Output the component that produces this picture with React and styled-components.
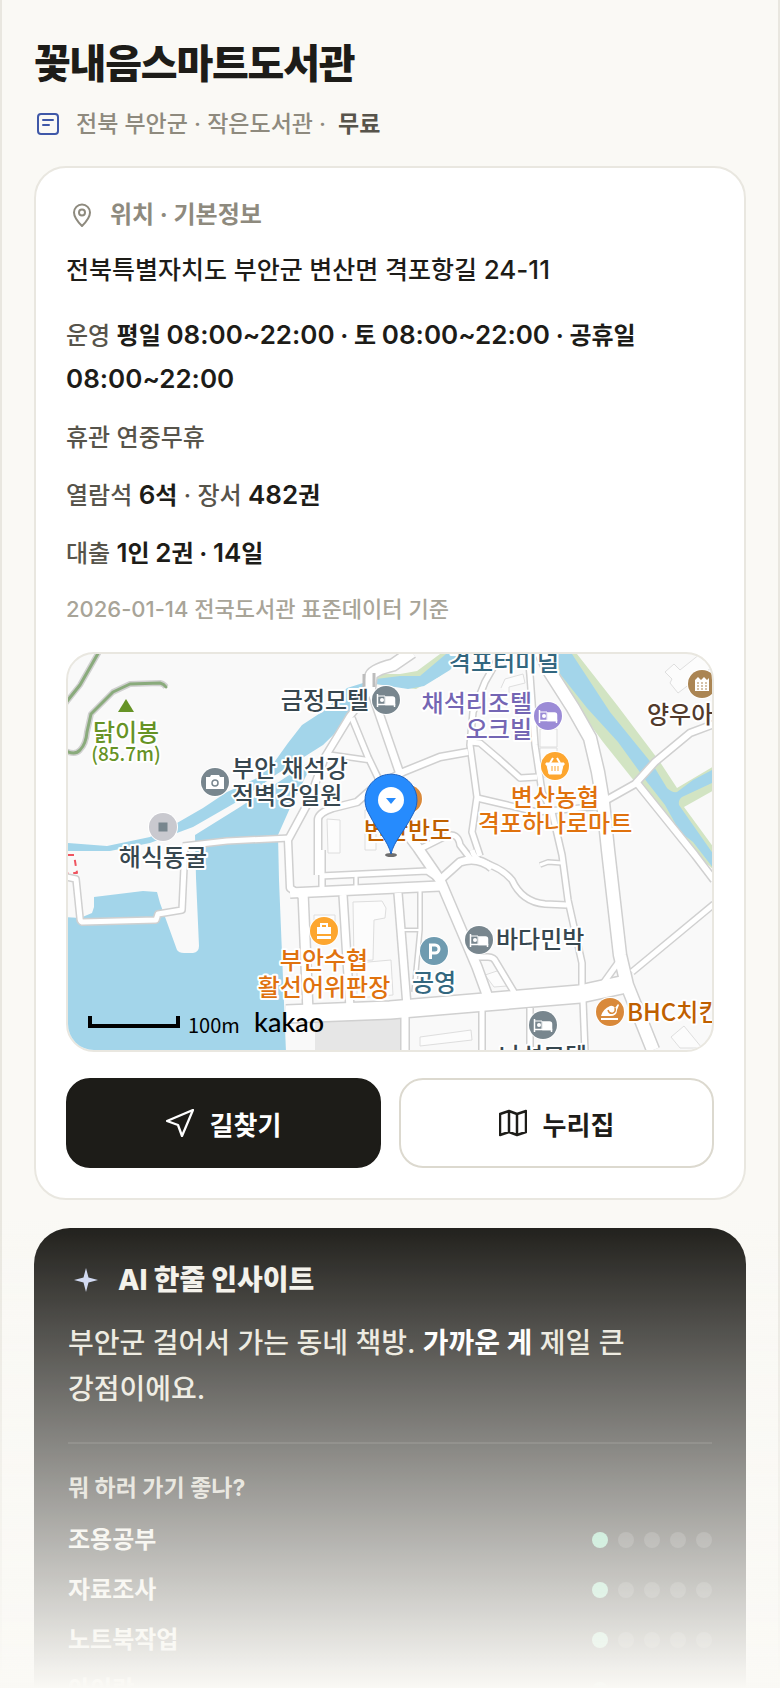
import React from "react";
import styled, { createGlobalStyle, css } from "styled-components";

const GlobalStyle = createGlobalStyle`
  * {
    box-sizing: border-box;
  }
  body {
    margin: 0;
    background-color: #faf9f5;
    color: #1d1c18;
    font-family: Inter, "Noto Sans CJK KR", sans-serif;
    word-break: keep-all;
  }
  h1, h2, h3, p, ul {
    margin: 0;
    padding: 0;
  }
`;

const Page = styled.main`
  height: 100vh;
  overflow: hidden;
  display: flex;
  flex-direction: column;
  padding: 34px 32px 0;
  border-left: 2px solid #e9e7e0;
  border-right: 2px solid #e9e7e0;
`;

const Title = styled.h1`
  font-size: 40px;
  line-height: 60px;
  font-weight: 800;
  letter-spacing: -0.03em;
`;

const Meta = styled.div`
  display: flex;
  align-items: center;
  gap: 12px;
  margin-top: 12px;
  padding-left: 2px;
  font-size: 23px;
  line-height: 36px;
  font-weight: 500;
  color: #8e8a7e;
  strong {
    color: #57544b;
    font-weight: 700;
  }
  svg {
    margin-right: 4px;
  }
`;

const Card = styled.section`
  flex: none;
  margin-top: 24px;
  padding: 30px;
  border: 2px solid #e9e7e0;
  border-radius: 32px;
  background-color: #fff;
`;

const CardHeader = styled.h2`
  display: flex;
  align-items: center;
  gap: 16px;
  padding-left: 4px;
  font-size: 24px;
  line-height: 34px;
  font-weight: 700;
  color: #8e8a7e;
`;

const Address = styled.p`
  margin-top: 18px;
  font-size: 25px;
  line-height: 40px;
  font-weight: 500;
`;

const Hours = styled.div`
  margin-top: 24px;
`;

const Info = styled.p`
  margin-bottom: 14px;
  font-size: 24px;
  line-height: 44px;
  font-weight: 500;
  color: #57544b;
  strong {
    color: #1d1c18;
    font-weight: 700;
  }
`;

const Num = styled.span`
  font-size: 26px;
  line-height: 1;
  strong & {
    font-weight: 600;
  }
`;

const Source = styled.p`
  margin-top: 16px;
  font-size: 22px;
  line-height: 34px;
  font-weight: 500;
  color: #a8a498;
`;

const MapBox = styled.div`
  height: 400px;
  margin-top: 26px;
  border: 2px solid #e9e7e0;
  border-radius: 28px;
  overflow: hidden;
  background-color: #f9f9f9;
  svg {
    display: block;
    width: 100%;
    height: 100%;
  }
`;

const Actions = styled.div`
  display: grid;
  grid-template-columns: 1fr 1fr;
  gap: 18px;
  margin-top: 26px;
`;

const Button = styled.button`
  display: flex;
  align-items: center;
  justify-content: center;
  gap: 16px;
  height: 90px;
  border: 2px solid #dcd9cf;
  border-radius: 24px;
  background-color: #fff;
  color: #1d1c18;
  font-family: inherit;
  font-size: 26px;
  font-weight: 700;
  cursor: pointer;
  ${({ $primary }) =>
    $primary &&
    css`
      border-color: #1d1c18;
      background-color: #1d1c18;
      color: #fff;
    `}
`;

const Insight = styled.section`
  flex: none;
  margin-top: 28px;
  padding: 34px;
  border-radius: 36px;
  background-color: #1d1c18;
  color: #f3f1ea;
`;

const InsightTitle = styled.h2`
  display: flex;
  align-items: center;
  gap: 20px;
  padding-left: 6px;
  font-size: 28px;
  line-height: 36px;
  font-weight: 800;
`;

const InsightText = styled.p`
  margin-top: 22px;
  font-size: 28px;
  line-height: 46px;
  font-weight: 500;
  color: #e9e6db;
  strong {
    color: #fff;
    font-weight: 700;
  }
`;

const Fits = styled.div`
  margin-top: 30px;
  padding-top: 26px;
  border-top: 2px solid rgba(255, 255, 255, 0.1);
`;

const FitsTitle = styled.h3`
  margin-bottom: 16px;
  font-size: 23px;
  line-height: 36px;
  font-weight: 700;
  color: #d3d0c5;
`;

const FitList = styled.ul`
  display: grid;
  gap: 14px;
  list-style: none;
`;

const FitRow = styled.li`
  display: flex;
  align-items: center;
  justify-content: space-between;
  font-size: 24px;
  line-height: 36px;
  font-weight: 600;
`;

const Dots = styled.span`
  display: flex;
  gap: 10px;
`;

const Dot = styled.span`
  width: 16px;
  height: 16px;
  border-radius: 50%;
  background-color: ${({ $on }) => ($on ? "#7fd8b0" : "rgba(255, 255, 255, 0.16)")};
`;

const Fade = styled.div`
  position: fixed;
  left: 0;
  right: 0;
  bottom: 0;
  height: 28vh;
  background: linear-gradient(to bottom, rgba(250, 249, 245, 0), #faf9f5);
  pointer-events: none;
`;

const MapLabel = styled.text`
  font-family: "Noto Sans CJK KR", sans-serif;
  font-size: ${({ $small }) => ($small ? "19px" : "24px")};
  font-weight: 500;
  fill: ${({ $color }) => $color};
  stroke: #fff;
  stroke-width: 4px;
  stroke-linejoin: round;
  paint-order: stroke;
`;

const MapScale = styled.text`
  font-family: "Noto Sans CJK KR", sans-serif;
  font-size: 20px;
`;

const MapLogo = styled.text`
  font-family: Lato, sans-serif;
  font-size: 27px;
  font-weight: 500;
`;

// [path, outer width]
const roads = [
  ["M412 652L393 665Q372 670 371 676L369 692", 14],
  ["M371 690L400 774", 10],
  ["M369 692L350 716L325 757L308 803L288 840L290 888L303 897", 9],
  ["M352 718L368 757L380 782", 8],
  ["M326 754L368 760", 7],
  ["M318 875V820Q318 813 333 808L357 802L373 788L403 772L440 757L468 752", 9],
  ["M502 652L485 682L473 712L470 745L477 797L472 832L480 856", 8],
  ["M470 742L480 743L500 760L520 778L537 777", 8],
  ["M540 650L550 672L573 708L590 738L598 772L603 802L608 850L620 955L627 985L653 1050", 15],
  ["M603 802L635 784L655 762L690 733L714 724", 9],
  ["M637 783L695 855L714 880", 9],
  ["M528 654L530 675L535 745L542 792L552 812L562 855L568 900L582 963V990", 8],
  ["M477 798L507 805L537 812L603 806", 8],
  ["M472 850Q474 858 482 862Q502 868 512 880Q522 902 545 904L567 905", 8],
  ["M540 865L548 862L562 863", 6],
  ["M714 904L632 972", 8],
  ["M286 1014L390 1010L473 1003L580 994L626 984", 20],
  ["M620 960L602 985", 8],
  ["M583 1000L585 1052", 8],
  ["M530 1008V1052", 8],
  ["M482 1010V1052", 8],
  ["M405 1010V1052", 10],
  ["M474 957H488Q494 957 496 962L514 992", 8],
  ["M470 948L488 997", 8],
  ["M303 892L308 1012", 12],
  ["M290 893L440 886", 12],
  ["M320 876L427 871L440 880", 8],
  ["M322 850V890", 8],
  ["M356 873V890", 6],
  ["M343 895L350 1008", 10],
  ["M398 893L407 1006", 10],
  ["M373 788L418 848L440 880L477 967L489 1000", 12],
  ["M440 880L460 862Q478 856 492 868", 10],
  ["M418 850L446 836Q458 832 460 845L470 858", 8],
  ["M420 890V930L414 992", 6],
  ["M400 930H420", 5],
  ["M183 846L227 841L290 838", 8],
  ["M185 846L182 910L158 914L156 920L82 922Q80 921 80 918L76 879L66 877", 8],
];

const trails = [
  "M100 650L80 685L64 705",
  "M64 750Q75 756 80 750Q86 744 87 732L91 714L113 692L130 684L160 683Q164 684 166 687",
];

const buildings = [
  "M327 819L340 820V853H328Z",
  "M365 810H376V850H365Z",
  "M314 915H335V935H314Z",
  "M353 902L382 901L386 908L385 918L374 920L373 960L354 961Z",
  "M357 963L391 960L393 995L357 998Z",
  "M540 729H557V747H540Z",
  "M540 748H557V777H540Z",
  "M501 688L505 679L523 674L525 683L509 687V693",
  "M665 672L674 664L680 670L700 654L711 668L678 693L670 683L672 679Z",
  "M420 1037L471 1030L472 1040L420 1046Z",
  "M485 975L500 970L507 986L494 987Z",
  "M671 1037L684 1026L702 1048H680Z",
];

const labels = [
  { text: "격포터미널", x: 504, y: 671, color: "#33677f" },
  { text: "금정모텔", x: 325, y: 709, color: "#37474f" },
  { text: "채석리조텔", x: 532, y: 712, anchor: "end", color: "#7466b4" },
  { text: "오크빌", x: 532, y: 738, anchor: "end", color: "#7466b4" },
  { text: "양우아파트", x: 647, y: 723, anchor: "start", color: "#523a2c" },
  { text: "닭이봉", x: 126, y: 741, color: "#669326" },
  { text: "(85.7m)", x: 126, y: 761, color: "#669326", small: true },
  { text: "부안 채석강", x: 232, y: 777, anchor: "start", color: "#37474f" },
  { text: "적벽강일원", x: 232, y: 804, anchor: "start", color: "#37474f" },
  { text: "변산농협", x: 555, y: 806, color: "#e0720e" },
  { text: "격포하나로마트", x: 555, y: 832, color: "#e0720e" },
  { text: "변산반도", x: 408, y: 839, color: "#bf6000" },
  { text: "해식동굴", x: 163, y: 866, color: "#37474f" },
  { text: "부안수협", x: 324, y: 969, color: "#e0720e" },
  { text: "활선어위판장", x: 324, y: 996, color: "#e0720e" },
  { text: "공영", x: 434, y: 991, color: "#33677f" },
  { text: "바다민박", x: 496, y: 948, anchor: "start", color: "#37474f" },
  { text: "BHC치킨", x: 627, y: 1021, anchor: "start", color: "#bf6000" },
  { text: "나성모텔", x: 543, y: 1065, color: "#37474f" },
];

const Bed = () => (
  <g fill="none" stroke="#fff" strokeWidth="1.500">
    <path d="M-8.500 -6V7M-8.500 4.500H8.500V7" />
    <path d="M0 -3H6.500Q8.500 -3 8.500 -1V4.500H0Z" fill="#fff" />
    <path d="M-8 -4H-1V4" strokeWidth="1" />
    <circle cx="-4" cy="0" r="2" fill="#fff" stroke="none" />
  </g>
);

const pois = [
  { x: 386, y: 700, color: "#78868e", glyph: <Bed /> },
  { x: 548, y: 716, color: "#9b8bd6", glyph: <Bed /> },
  { x: 479, y: 940, color: "#78868e", glyph: <Bed /> },
  { x: 543, y: 1025, color: "#78868e", glyph: <Bed /> },
  {
    x: 555,
    y: 766,
    color: "#fda62f",
    glyph: (
      <g fill="none" stroke="#fff" strokeWidth="2">
        <path d="M-9 -3H9V-1H8L6 8H-6L-8 -1H-9Z" fill="#fff" strokeWidth="1" />
        <path d="M-5 -3L-2 -8M5 -3L2 -8" />
        <path d="M-3 0V5M0 0V5M3 0V5" stroke="#fda62f" strokeWidth="1" />
      </g>
    ),
  },
  {
    x: 702,
    y: 684,
    color: "#ab8553",
    glyph: (
      <g>
        <path d="M-7 7V-4L-4 -7L-1 -4L2 -7L5 -4L7 -6V7Z" fill="#fff" />
        <path d="M-5 -1H6M-5 2H6M-5 5H6" stroke="#ab8553" strokeWidth="1" strokeDasharray="2 2" />
      </g>
    ),
  },
  {
    x: 215,
    y: 782,
    color: "#78868e",
    glyph: (
      <g>
        <path d="M-9 -5H-5L-4 -7H4L5 -5H9V7H-9Z" fill="#fff" />
        <circle cx="0" cy="1" r="3" fill="none" stroke="#78868e" strokeWidth="1.500" />
      </g>
    ),
  },
  { x: 163, y: 827, color: "#c9c9cf", glyph: <rect x="-4.500" y="-4.500" width="9" height="9" fill="#78868e" /> },
  { x: 408, y: 799, color: "#d9893a", glyph: null },
  {
    x: 324,
    y: 931,
    color: "#fda62f",
    glyph: (
      <g>
        <path d="M-7 -4H7V3H-7ZM-7 5H7V8H-7Z" fill="#fff" />
        <path d="M-3 -4V-7H3V-4" fill="none" stroke="#fff" strokeWidth="2" />
      </g>
    ),
  },
  {
    x: 434,
    y: 951,
    color: "#6f9bb0",
    glyph: <path d="M-3.500 8V-6H1A4 4 0 0 1 1 2H-3" fill="none" stroke="#fff" strokeWidth="3" />,
  },
  {
    x: 610,
    y: 1012,
    color: "#d9893a",
    glyph: (
      <g>
        <path d="M-9 7H8" stroke="#fff" strokeWidth="2" />
        <path d="M-9 4Q-7 -3 0 -6Q3 -7 5 -4L8 -8L9 -7L7 -2Q7 4 0 4Z" fill="#fff" />
        <path d="M-2 -2Q-1 2 3 1Q6 0 5 -4" fill="none" stroke="#d9893a" strokeWidth="1.500" />
      </g>
    ),
  },
];

const LocationMap = () => (
  <svg viewBox="68 654 644 396" preserveAspectRatio="xMidYMid slice" role="img" aria-label="지도">
    <g fill="#d2e4c3">
      <path d="M376 674L400 674L417 671L440 654H466L440 676L416 689L376 684Z" />
      <path d="M554 654H577L617 705L660 762L677 788L714 766V790L684 807L714 848V870L697 855L667 822L635 782L603 742L572 700L558 677Z" />
    </g>
    <g fill="#a3d5ea">
      <path d="M446 654L420 676L400 676L376 679L347 688L328 708L302 725L288 743L273 764L257 778L227 792L203 808L177 823L150 837L107 846L67 843V851L110 851L150 843L193 827L240 800L277 774L323 745L357 712L376 684L408 689L424 686L450 670L464 654Z" />
      <path d="M195 835L240 807L300 768L314 760L290 808L278 835L279 880L286 1052H66V917L80 918L92 913L94 907V897L143 891L157 892L160 903L177 950Q179 953 184 953H193Q199 952 199 946L196 878Z" />
      <path d="M557 654H572L610 712L653 765L667 788Q672 793 677 792L693 780L714 769V782L682 797Q678 800 679 805L714 855V869L693 842L680 832L665 805L647 782L618 742L587 708L560 674Z" />
    </g>
    <path d="M315 1022L400 1018V1052H315Z" fill="#e6e6e6" />
    <g fill="none" strokeLinejoin="round">
      {buildings.map((d) => (
        <path key={d} d={d} fill="#fcfcfc" stroke="#dedede" />
      ))}
      {roads.map(([d, width]) => (
        <path key={d} d={d} stroke="#d0d0d0" strokeWidth={width} />
      ))}
      {roads.map(([d, width]) => (
        <path key={d} d={d} stroke="#fff" strokeWidth={width - 3} />
      ))}
      {trails.map((d) => (
        <path key={d} d={d} stroke="#d0d0d0" strokeWidth="6" />
      ))}
      {trails.map((d) => (
        <path key={d} d={d} stroke="#8aab7c" strokeWidth="3" strokeLinecap="round" />
      ))}
      <path d="M364 674V688M374 673V687" stroke="#bdbdbd" strokeWidth="3" />
      <path d="M68 855H74L77 873H68" stroke="#ef5560" strokeWidth="2" strokeDasharray="6 5" />
    </g>
    <path d="M126 699L134 712H118Z" fill="#669326" />
    {pois.map(({ x, y, color, glyph }) => (
      <g key={`${x}-${y}`} transform={`translate(${x} ${y})`}>
        <circle r="15" fill="#fff" />
        <circle r="14" fill={color} />
        {glyph}
      </g>
    ))}
    {labels.map(({ text, x, y, anchor = "middle", color, small }) => (
      <MapLabel key={text} x={x} y={y} textAnchor={anchor} $color={color} $small={small}>
        {text}
      </MapLabel>
    ))}
    <ellipse cx="391" cy="855" rx="6" ry="2" fill="#6e6e6e" />
    <path
      d="M391 854C388 841 378 832 369 814A26 26 0 1 1 413 814C404 832 394 841 391 854Z"
      fill="#268bfd"
      stroke="#1a62c4"
    />
    <circle cx="391" cy="800" r="13" fill="#fff" />
    <path d="M386 798H396L391 804Z" fill="#268bfd" />
    <path d="M90 1016V1026H178V1016" fill="none" stroke="#000" strokeWidth="4" />
    <MapScale x="188" y="1033">
      100m
    </MapScale>
    <MapLogo x="254" y="1032">
      kakao
    </MapLogo>
  </svg>
);

const MemoIcon = () => (
  <svg width="24" height="24" viewBox="0 0 24 24" fill="none" stroke="#3f58a8" strokeWidth="2" strokeLinecap="round">
    <rect x="2" y="2" width="20" height="20" rx="3" />
    <path d="M7 8H17M7 13H13" />
  </svg>
);

const PinIcon = () => (
  <svg width="24" height="24" viewBox="0 0 24 24" fill="none" stroke="currentColor" strokeWidth="2">
    <path d="M12 23C7 18 4 14 4 9.500A8 8 0 0 1 20 9.500C20 14 17 18 12 23Z" />
    <circle cx="12" cy="9.500" r="3" />
  </svg>
);

const ArrowIcon = () => (
  <svg width="28" height="28" viewBox="0 0 28 28" fill="none" stroke="currentColor" strokeWidth="2.300" strokeLinejoin="round">
    <path d="M27 1L1 12L12 16L16 27Z" />
  </svg>
);

const MapIcon = () => (
  <svg width="28" height="28" viewBox="0 0 28 28" fill="none" stroke="currentColor" strokeWidth="2.500" strokeLinejoin="round">
    <path d="M1 5L10 2L18 5L27 2V23L18 26L10 23L1 26ZM10 2V23M18 5V26" />
  </svg>
);

const SparkIcon = () => (
  <svg width="24" height="24" viewBox="0 0 24 24" fill="#ccd6f2">
    <path d="M12 0L14.500 9.500L24 12L14.500 14.500L12 24L9.500 14.500L0 12L9.500 9.500Z" />
  </svg>
);

const fits = [
  { name: "조용공부", score: 1 },
  { name: "자료조사", score: 1 },
  { name: "노트북작업", score: 1 },
  { name: "아이랑", score: 1 },
];

const App = () => {
  return (
    <>
      <GlobalStyle />
      <Page>
        <Title>꽃내음스마트도서관</Title>
        <Meta>
          <MemoIcon />
          <span>전북 부안군 · 작은도서관 ·</span>
          <strong>무료</strong>
        </Meta>
        <Card>
          <CardHeader>
            <PinIcon />
            위치 · 기본정보
          </CardHeader>
          <Address>
            전북특별자치도 부안군 변산면 격포항길 <Num>24-11</Num>
          </Address>
          <Hours>
            <Info>
              운영{" "}
              <strong>
                평일 <Num>08:00~22:00</Num> · 토 <Num>08:00~22:00</Num> · 공휴일 <Num>08:00~22:00</Num>
              </strong>
            </Info>
            <Info>휴관 연중무휴</Info>
            <Info>
              열람석{" "}
              <strong>
                <Num>6</Num>석
              </strong>{" "}
              · 장서{" "}
              <strong>
                <Num>482</Num>권
              </strong>
            </Info>
            <Info>
              대출{" "}
              <strong>
                <Num>1</Num>인 <Num>2</Num>권 · <Num>14</Num>일
              </strong>
            </Info>
          </Hours>
          <Source>2026-01-14 전국도서관 표준데이터 기준</Source>
          <MapBox>
            <LocationMap />
          </MapBox>
          <Actions>
            <Button $primary type="button">
              <ArrowIcon />
              길찾기
            </Button>
            <Button type="button">
              <MapIcon />
              누리집
            </Button>
          </Actions>
        </Card>
        <Insight>
          <InsightTitle>
            <SparkIcon />
            AI 한줄 인사이트
          </InsightTitle>
          <InsightText>
            부안군 걸어서 가는 동네 책방. <strong>가까운 게</strong> 제일 큰 강점이에요.
          </InsightText>
          <Fits>
            <FitsTitle>뭐 하러 가기 좋나?</FitsTitle>
            <FitList>
              {fits.map(({ name, score }) => (
                <FitRow key={name}>
                  {name}
                  <Dots>
                    {[1, 2, 3, 4, 5].map((n) => (
                      <Dot key={n} $on={n <= score} />
                    ))}
                  </Dots>
                </FitRow>
              ))}
            </FitList>
          </Fits>
        </Insight>
      </Page>
      <Fade />
    </>
  );
};

export default App;
